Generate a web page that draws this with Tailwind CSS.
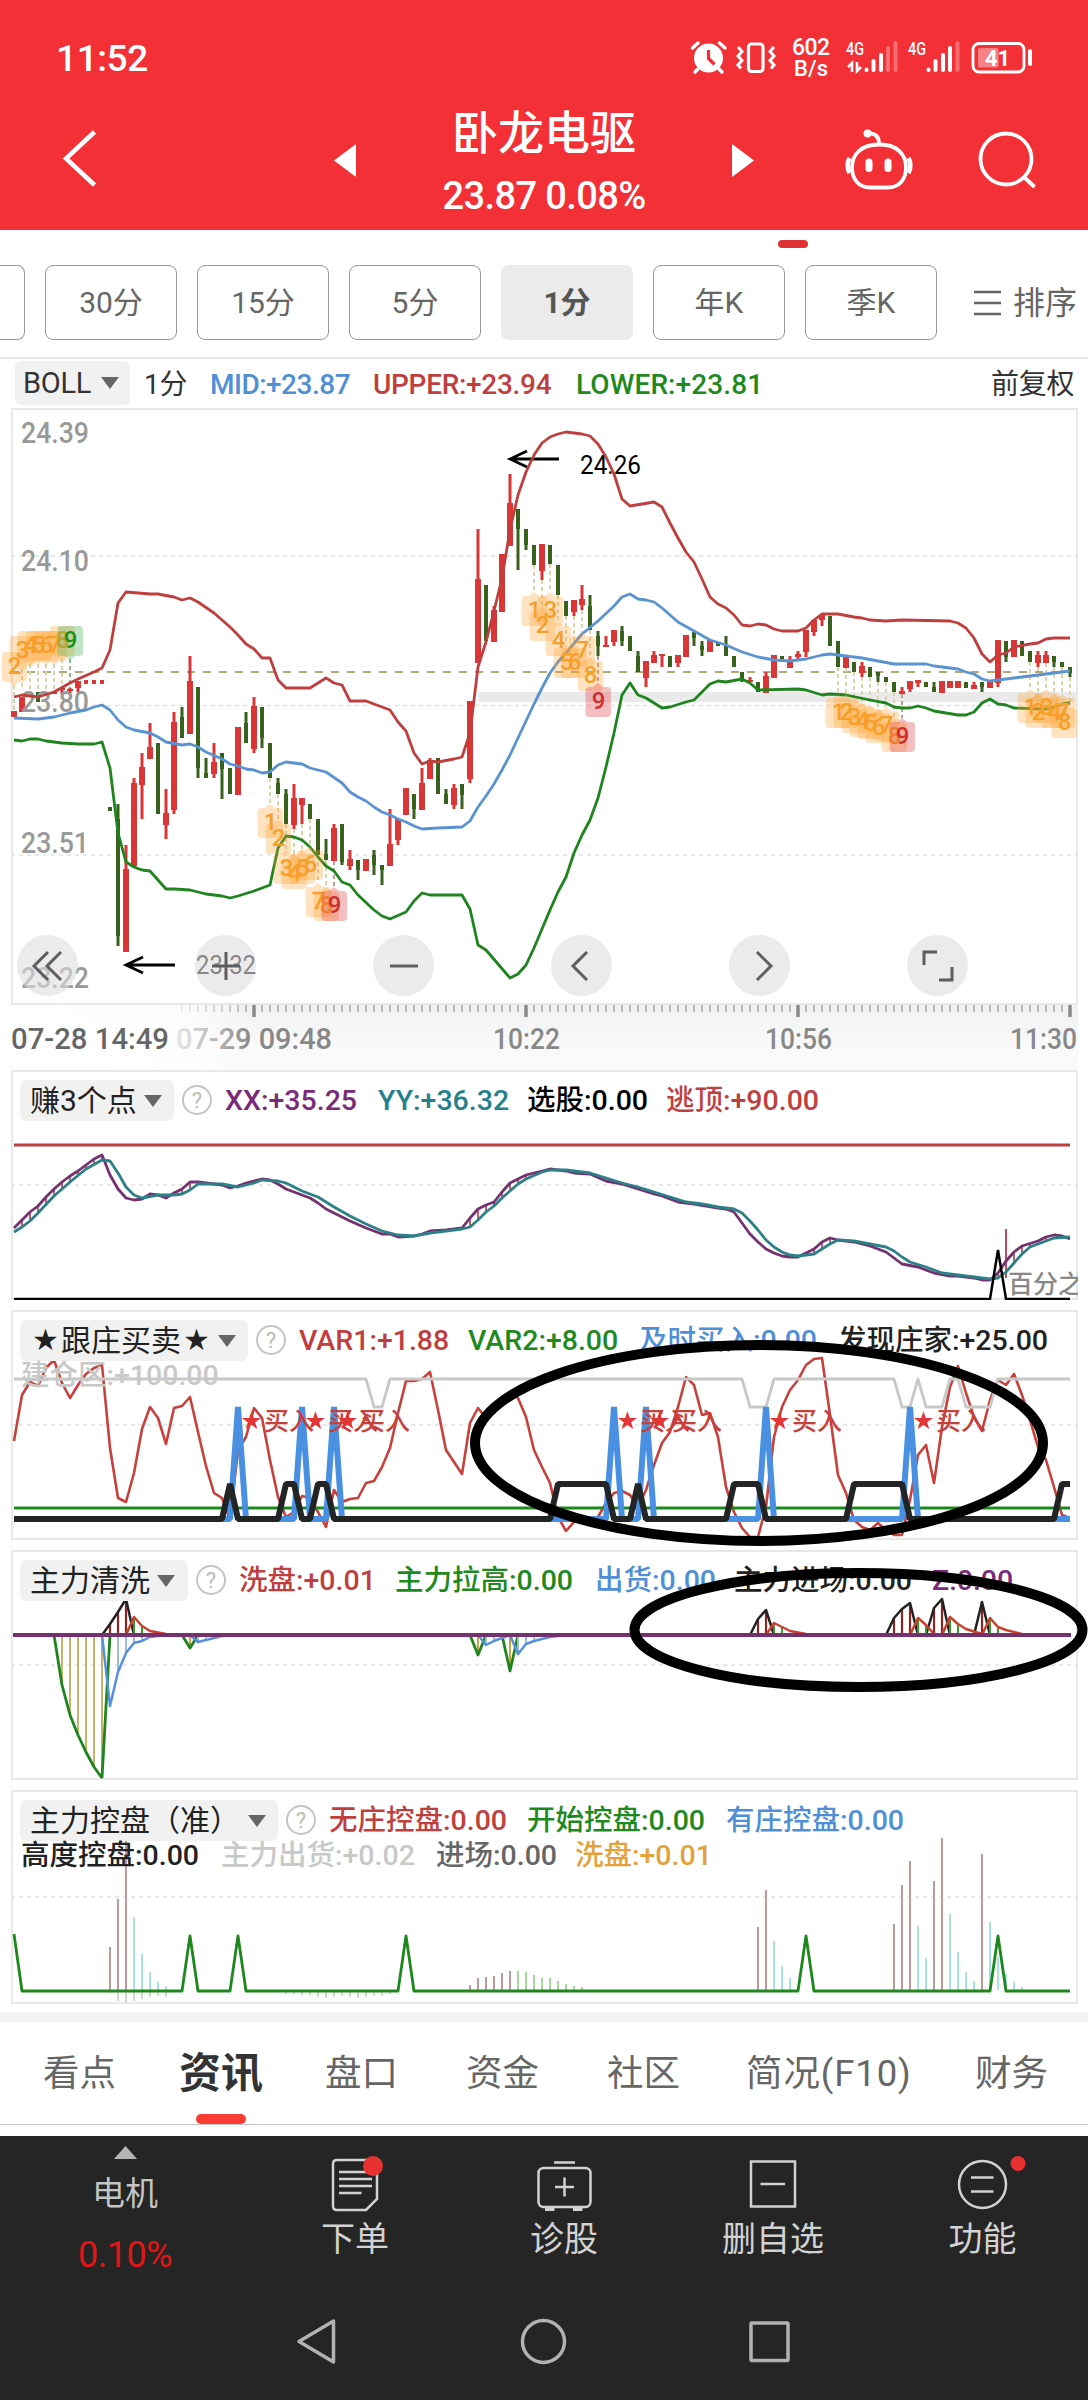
<!DOCTYPE html>
<html lang="zh-CN">
<head>
<meta charset="UTF-8">
<meta name="viewport" content="width=1088">
<title>卧龙电驱</title>
<script src="https://cdn.jsdelivr.net/npm/@tailwindcss/browser@4"></script>
</head>
<body class="bg-white">
<div class="relative w-[1088px] h-[2400px] overflow-hidden bg-white font-['Roboto','Noto_Sans_CJK_SC',sans-serif] text-[#222]">

    <!-- 顶部 -->
    <header class="h-[230px] bg-[#f23036] text-white">
        <div class="h-[100px] flex justify-between pl-[56px] pr-[54px]">
            <div class="pt-[32px] text-[37px] leading-[54px] font-medium tracking-[-0.4px]">11:52</div>
            <svg class="w-[344px] h-[100px]" viewBox="690 0 344 100" fill="none" stroke="#fff">
                <circle cx="708.5" cy="58" r="14.5" fill="#fff" stroke="none"/>
                <path d="M708.500 50v8.500l6 6" stroke="#f23036" stroke-width="3.200"/>
                <path d="M692.500 48l5.500-5M725 48l-5.500-5M698 69l-3 3M719 69l3 3" stroke-width="3.500" stroke-linecap="round"/>
                <rect x="748.500" y="44" width="14.500" height="27.500" rx="3" stroke-width="3.200"/>
                <path d="M738 47l4 4.500-4 4.500 4 4.500-4 4.500 3 3.500M774 47l-4 4.500 4 4.500-4 4.500 4 4.500-3 3.500" stroke-width="3"/>
                <g fill="#fff" stroke="none" font-weight="500">
                    <text x="792" y="55" font-size="23" textLength="38">602</text>
                    <text x="794" y="76" font-size="22" textLength="34">B/s</text>
                    <text x="846" y="55" font-size="19" textLength="18" lengthAdjust="spacingAndGlyphs">4G</text>
                    <text x="908" y="55" font-size="19" textLength="18" lengthAdjust="spacingAndGlyphs">4G</text>
                </g>
                <path d="M852 72v-9l-4 4M857 62v9l4-4" stroke-width="2.500"/>
                <g stroke-width="4" stroke-linecap="round">
                    <path d="M866.500 69.500v.5M873.500 61v9M881 55v15M928.500 69.500v.5M935.500 61v9M943 55v15M950 48v22"/>
                    <path d="M888 48v22M895.500 43v27M957.500 43v27" stroke-opacity=".3"/>
                </g>
                <rect x="973" y="43.500" width="51" height="28.500" rx="6" stroke-width="2.800"/>
                <rect x="978" y="48" width="20.500" height="19.500" rx="2" fill="#fff" fill-opacity=".4" stroke="none"/>
                <path d="M1030 51v13" stroke-width="4" stroke-linecap="round"/>
                <text x="985" y="66" font-size="22" font-weight="700" fill="#fff" stroke="none">41</text>
            </svg>
        </div>
        <div class="h-[130px] flex pl-[60px]">
            <svg class="w-10 h-[60px] mt-[28px]" viewBox="60 128 40 60" fill="none" stroke="#fff" stroke-width="4.500"><path d="M94.500 132L66 158.500 94.500 185"/></svg>
            <div class="flex pl-[234px]">
                <svg class="w-[22px] h-[34px] mt-[44px]" viewBox="0 0 22 34"><path d="M22 0v33L0 16.500z" fill="#fff"/></svg>
                <div class="w-[376px] text-center">
                    <div class="text-[46px] leading-[66px] font-medium">卧龙电驱</div>
                    <div class="text-[38px] leading-[60px] font-medium tracking-[-0.6px]">23.87 0.08%</div>
                </div>
                <svg class="w-[22px] h-[34px] mt-[44px]" viewBox="0 0 22 34"><path d="M0 0v33l22-16.500z" fill="#fff"/></svg>
            </div>
            <svg class="w-[200px] h-[70px] mt-[24px] ml-[86px]" viewBox="840 124 200 70" fill="none" stroke="#fff" stroke-width="3.800">
                <path d="M879 144.500h1c17 0 26 10 26 23 0 12-7 20-18 20h-18c-11 0-18-8-18-20 0-13 9-23 27-23z"/>
                <path d="M849.500 158c-2.500 4-2.500 11 0 15M908.500 158c2.500 4 2.500 11 0 15" stroke-width="4.500"/>
                <path d="M868 133.500c7-1 11 3 11 10"/>
                <circle cx="867.500" cy="133.500" r="4" fill="#fff" stroke="none"/>
                <path d="M869 162v6.500M888 162v6.500" stroke-width="7" stroke-linecap="round"/>
                <circle cx="1006" cy="159" r="25.500"/>
                <path d="M1024 177l10.500 10"/>
            </svg>
        </div>
    </header>

    <!-- 周期 -->
    <section class="h-[129px] border-b-2 border-[#e8e8e8]">
        <div class="pt-[10px] h-[35px] pl-[778px]"><div class="w-[30px] h-2 rounded-full bg-[#df3033]"></div></div>
        <div class="flex items-center text-[30px] leading-none text-[#666]">
            <div class="w-[25px] h-[75px] border border-l-0 border-[#999] rounded-r-lg mr-5"></div>
            <div class="flex gap-5">
                <div class="w-[132px] h-[75px] border border-[#999] rounded-lg flex items-center justify-center">30分</div>
                <div class="w-[132px] h-[75px] border border-[#999] rounded-lg flex items-center justify-center">15分</div>
                <div class="w-[132px] h-[75px] border border-[#999] rounded-lg flex items-center justify-center">5分</div>
                <div class="w-[132px] h-[75px] bg-[#ebebeb] rounded-lg flex items-center justify-center font-bold text-[#555]">1分</div>
                <div class="w-[132px] h-[75px] border border-[#999] rounded-lg flex items-center justify-center">年K</div>
                <div class="w-[132px] h-[75px] border border-[#999] rounded-lg flex items-center justify-center">季K</div>
            </div>
            <svg class="w-[27px] h-[26px] ml-[37px] mr-3" viewBox="0 0 27 26" stroke="#666" stroke-width="2.500"><path d="M0 2h27M0 13h27M0 24h27"/></svg>
            <div class="text-[32px] whitespace-nowrap">排序</div>
        </div>
    </section>

    <!-- 主图指标 -->
    <div class="h-[49px] flex items-start pl-[15px] text-[28px] leading-[44px] whitespace-nowrap tracking-[-0.3px]">
        <div class="w-[129px]">
            <div class="w-[115px] h-[44px] mt-[2px] bg-[#f1f1f1] rounded-md flex items-center pl-[8px] text-[29px] text-[#333]">BOLL
                <svg class="w-[18px] h-3 ml-[10px]" viewBox="0 0 18 12"><path d="M0 0h18l-9 12z" fill="#666"/></svg>
            </div>
        </div>
        <div class="w-[66px] pt-[4px] text-[#333]">1分</div>
        <div class="w-[163px] pt-[4px] font-medium text-[#4f8fd6] tracking-[-0.5px]">MID:+23.87</div>
        <div class="w-[203px] pt-[4px] font-medium text-[#bf3f3f]">UPPER:+23.94</div>
        <div class="w-[415px] pt-[4px] font-medium text-[#1e8a1e] tracking-[0.1px]">LOWER:+23.81</div>
        <div class="pt-[4px] text-[#333]">前复权</div>
    </div>

    <!-- K线 -->
    <div class="relative h-[597px]">
        <svg id="kline" class="block w-[1088px] h-[597px]" viewBox="0 408 1088 597"></svg>
        <div class="absolute left-[17px] bottom-[9px] flex gap-[117px]">
            <div class="size-[61px] rounded-full bg-[#dedede]/60 flex items-center justify-center"><svg class="size-10" viewBox="0 0 40 40" fill="none" stroke="#5e5e5e" stroke-width="3"><path d="M20 6L6 20l14 14M33 6L19 20l14 14"/></svg></div>
            <div class="size-[61px] rounded-full bg-[#dedede]/60 flex items-center justify-center"><svg class="size-10" viewBox="0 0 40 40" fill="none" stroke="#5e5e5e" stroke-width="3"><path d="M6 20h28M20 6v28"/></svg></div>
            <div class="size-[61px] rounded-full bg-[#dedede]/60 flex items-center justify-center"><svg class="size-10" viewBox="0 0 40 40" fill="none" stroke="#5e5e5e" stroke-width="3"><path d="M6 20h28"/></svg></div>
            <div class="size-[61px] rounded-full bg-[#dedede]/60 flex items-center justify-center"><svg class="size-10" viewBox="0 0 40 40" fill="none" stroke="#5e5e5e" stroke-width="3"><path d="M25 6L11 20l14 14"/></svg></div>
            <div class="size-[61px] rounded-full bg-[#dedede]/60 flex items-center justify-center"><svg class="size-10" viewBox="0 0 40 40" fill="none" stroke="#5e5e5e" stroke-width="3"><path d="M17 6l14 14-14 14"/></svg></div>
            <div class="size-[61px] rounded-full bg-[#dedede]/60 flex items-center justify-center"><svg class="size-10" viewBox="0 0 40 40" fill="none" stroke="#5e5e5e" stroke-width="3"><path d="M6 19V6h13M21 34h13V21"/></svg></div>
        </div>
    </div>

    <!-- 时间轴 -->
    <svg id="axis" class="block w-[1088px] h-[65px]" viewBox="0 1005 1088 65"></svg>

    <!-- 副图 -->
    <div class="flex flex-col gap-[10px] pl-[11px] text-[28.500px] leading-[41px] whitespace-nowrap font-medium">
        <div class="relative w-[1067px] h-[230px]">
            <svg id="p1" class="absolute inset-0 w-[1067px] h-[230px]" viewBox="11 1070 1067 230"></svg>
            <div class="relative flex pl-[9px] pt-[10px]">
                <div class="w-[154px] h-[41px] bg-[#f1f1f1] rounded-md flex items-center pl-[10px] text-[30px] font-normal text-[#222]">赚3个点
                    <svg class="w-[18px] h-3 ml-[7px]" viewBox="0 0 18 12"><path d="M0 0h18l-9 12z" fill="#666"/></svg></div>
                <div class="size-[30px] mt-[5px] ml-2 mr-[13px] border-2 border-[#c4c4c4] rounded-full text-[#bbb] text-[22px] leading-[27px] text-center font-normal">?</div>
                <div class="w-[153px] text-[#7a2a78]">XX:+35.25</div>
                <div class="w-[149px] text-[#25808a]">YY:+36.32</div>
                <div class="w-[139px] text-black">选股:0.00</div>
                <div class="text-[#bf3f3f]">逃顶:+90.00</div>
            </div>
        </div>
        <div class="relative w-[1067px] h-[230px]">
            <svg id="p2" class="absolute inset-0 w-[1067px] h-[230px]" viewBox="11 1310 1067 230"></svg>
            <div class="relative flex pl-[9px] pt-[10px]">
                <div class="w-[228px] h-[41px] bg-[#f1f1f1] rounded-md flex items-center pl-[10px] text-[30px] font-normal text-[#222]"><span class="text-[24px] w-[31px] text-center">★</span>跟庄买卖<span class="text-[24px] w-[31px] text-center">★</span>
                    <svg class="w-[18px] h-3 ml-[6px]" viewBox="0 0 18 12"><path d="M0 0h18l-9 12z" fill="#666"/></svg></div>
                <div class="size-[30px] mt-[5px] ml-2 mr-[13px] border-2 border-[#c4c4c4] rounded-full text-[#bbb] text-[22px] leading-[27px] text-center font-normal">?</div>
                <div class="w-[169px] text-[#bf3f3f]">VAR1:+1.88</div>
                <div class="w-[171px] text-[#1e8a1e]">VAR2:+8.00</div>
                <div class="w-[199px] text-[#4f8fd6]">及时买入:0.00</div>
                <div class="text-[#222]">发现庄家:+25.00</div>
            </div>
            <div class="relative pl-[10px] -mt-[6px] text-[#c8c8c8]">建仓区:+100.00</div>
        </div>
        <div class="relative w-[1067px] h-[230px]">
            <svg id="p3" class="absolute inset-0 w-[1067px] h-[230px]" viewBox="11 1550 1067 230"></svg>
            <div class="relative flex pl-[9px] pt-[10px]">
                <div class="w-[168px] h-[41px] bg-[#f1f1f1] rounded-md flex items-center pl-[10px] text-[30px] font-normal text-[#222]">主力清洗
                    <svg class="w-[18px] h-3 ml-[7px]" viewBox="0 0 18 12"><path d="M0 0h18l-9 12z" fill="#666"/></svg></div>
                <div class="size-[30px] mt-[5px] ml-2 mr-[13px] border-2 border-[#c4c4c4] rounded-full text-[#bbb] text-[22px] leading-[27px] text-center font-normal">?</div>
                <div class="w-[156px] text-[#bf3f3f]">洗盘:+0.01</div>
                <div class="w-[200px] text-[#1e8a1e]">主力拉高:0.00</div>
                <div class="w-[139px] text-[#4f8fd6]">出货:0.00</div>
                <div class="w-[198px] text-[#222]">主力进场:0.00</div>
                <div class="text-[#7a2a78]">Z:0.00</div>
            </div>
        </div>
        <div class="relative w-[1067px] h-[214px]">
            <svg id="p4" class="absolute inset-0 w-[1067px] h-[214px]" viewBox="11 1790 1067 214"></svg>
            <div class="relative flex pl-[9px] pt-[10px]">
                <div class="w-[258px] h-[41px] bg-[#f1f1f1] rounded-md flex items-center pl-[10px] text-[30px] font-normal text-[#222]">主力控盘（准）
                    <svg class="w-[18px] h-3 ml-[8px]" viewBox="0 0 18 12"><path d="M0 0h18l-9 12z" fill="#666"/></svg></div>
                <div class="size-[30px] mt-[5px] ml-2 mr-[13px] border-2 border-[#c4c4c4] rounded-full text-[#bbb] text-[22px] leading-[27px] text-center font-normal">?</div>
                <div class="w-[198px] text-[#bf3f3f]">无庄控盘:0.00</div>
                <div class="w-[199px] text-[#1e8a1e]">开始控盘:0.00</div>
                <div class="text-[#4f8fd6]">有庄控盘:0.00</div>
            </div>
            <div class="relative flex pl-[10px] -mt-[6px]">
                <div class="w-[200px] text-[#222]">高度控盘:0.00</div>
                <div class="w-[215px] text-[#c8c8c8]">主力出货:+0.02</div>
                <div class="w-[139px] text-[#666]">进场:0.00</div>
                <div class="text-[#e3a23c]">洗盘:+0.01</div>
            </div>
        </div>
    </div>

    <!-- 手绘圈注 -->
    <svg class="absolute left-0 top-[1300px] w-[1088px] h-[420px]" viewBox="0 1300 1088 420" fill="none" stroke="#000" stroke-width="10">
        <ellipse cx="759" cy="1443" rx="284" ry="98"/>
        <ellipse cx="858.500" cy="1630" rx="224" ry="57"/>
    </svg>

    <!-- 资讯标签 -->
    <div class="mt-2 h-[10px] bg-[#f4f4f4]"></div>
    <nav class="relative h-[103px] border-b border-[#c4c4c4] flex text-[36.500px] leading-[104px] text-[#666] whitespace-nowrap pl-[43px]">
        <div class="w-[136px]">看点</div>
        <div class="w-[146px] text-[42px] font-bold text-[#333]">资讯</div>
        <div class="w-[141px]">盘口</div>
        <div class="w-[141px]">资金</div>
        <div class="w-[139px]">社区</div>
        <div class="w-[229px] tracking-[0.9px]">简况(F10)</div>
        <div>财务</div>
        <div class="absolute left-[196px] bottom-0 w-[50px] h-[10px] rounded-full bg-[#fa3c32]"></div>
    </nav>

    <!-- 底部 -->
    <footer class="mt-[11px] h-[264px] bg-[#252525] text-[34px] text-[#d2d2d2]">
        <div class="h-[144px] flex leading-[50px] text-center">
            <div class="w-[250px] pt-[10px] flex flex-col items-center">
                <svg class="w-[25px] h-[14px]" viewBox="0 0 25 14"><path d="M12.500 0L25 14H0z" fill="#b4b4b4"/></svg>
                <div class="mt-[10px] text-[33px] text-[#c4c4c4]">电机</div>
                <div class="mt-[11px] text-[36px] tracking-[-0.5px] text-[#e01616]">0.10%</div>
            </div>
            <div class="w-[210px] pt-[18px] flex flex-col items-center">
                <svg class="w-[60px] h-[60px] overflow-visible" viewBox="325 2154 60 60" fill="none" stroke="#d2d2d2" stroke-width="2.500">
                    <path d="M337 2160h36q4 0 4 4v35l-11 11h-29q-4 0-4-4v-42q0-4 4-4z"/>
                    <path d="M339 2172h30M339 2179h33M339 2186h33M339 2193h22.500"/>
                    <circle cx="373" cy="2166" r="10" fill="#e83232" stroke="none"/>
                </svg>
                <div>下单</div>
            </div>
            <div class="w-[208px] pt-[18px] flex flex-col items-center">
                <svg class="w-[60px] h-[60px]" viewBox="534 2154 60 60" fill="none" stroke="#d2d2d2" stroke-width="2.500">
                    <rect x="538.500" y="2168" width="52" height="39" rx="5"/>
                    <path d="M554 2162.500h21M564.500 2177.500v19M555 2187h19"/>
                    <path d="M545 2209h9.500M573 2209h9.500" stroke-width="4"/>
                </svg>
                <div>诊股</div>
            </div>
            <div class="w-[210px] pt-[18px] flex flex-col items-center">
                <svg class="w-[60px] h-[60px]" viewBox="743 2154 60 60" fill="none" stroke="#d2d2d2" stroke-width="2.500">
                    <rect x="751" y="2161.500" width="44" height="45"/>
                    <path d="M760.500 2184H785"/>
                </svg>
                <div>删自选</div>
            </div>
            <div class="w-[209px] pt-[18px] flex flex-col items-center">
                <svg class="w-[60px] h-[60px] overflow-visible" viewBox="953 2154 60 60" fill="none" stroke="#d2d2d2" stroke-width="2.500">
                    <circle cx="982.500" cy="2184.500" r="23.500"/>
                    <path d="M971 2177.500h22.500M971 2191.500h22.500"/>
                    <circle cx="1018" cy="2163.500" r="7.500" fill="#e83232" stroke="none"/>
                </svg>
                <div>功能</div>
            </div>
        </div>
        <svg class="block w-[1088px] h-[120px]" viewBox="0 2280 1088 120" fill="none" stroke="#b2b2b2" stroke-width="3.500" stroke-linejoin="round">
            <path d="M333.500 2321v41L299 2341.500z"/>
            <circle cx="543.500" cy="2341.500" r="21"/>
            <rect x="751" y="2323" width="37" height="37.500" rx="1"/>
        </svg>
    </footer>
</div>

<script>
const RED = '#bf3f3f', GREEN = '#1e841e', BLUE = '#5a93d2';
// 每根K线间隔8px
const X = i => 14 + 8 * i;

// "索引:y 索引:y ..." 转为点
function pts(s) {
    return s.trim().split(/\s+/).map(p => p.split(':').map(Number));
}
function line(s, color, w = 2.5, join = 'round') {
    return `<polyline points="${pts(s).map(([i, y]) => X(i) + ',' + y).join(' ')}" fill="none" stroke="${color}" stroke-width="${w}" stroke-linejoin="${join}"/>`;
}
function at(p, i) {
    for (let k = 1; k < p.length; k++) {
        if (i <= p[k][0]) {
            const [a, ya] = p[k - 1], [b, yb] = p[k];
            return ya + (yb - ya) * (i - a) / (b - a);
        }
    }
    return p[p.length - 1][1];
}
function vline(i, y1, y2, color, w = 2) {
    return `<line x1="${X(i)}" x2="${X(i)}" y1="${y1}" y2="${y2}" stroke="${color}" stroke-width="${w}"/>`;
}
function hline(y, color, w, dash = '', x1 = 14, x2 = 1070) {
    return `<line x1="${x1}" x2="${x2}" y1="${y}" y2="${y}" stroke="${color}" stroke-width="${w}" stroke-dasharray="${dash}"/>`;
}
const frame = (y, h) => `<rect x="12" y="${y + 1}" width="1065" height="${h - 2}" fill="none" stroke="#e8e8e8" stroke-width="2"/>`;
const grid = y => hline(y, '#e2e2e2', 1.5, '4 4', 11, 1077);
const put = (id, html) => document.getElementById(id).innerHTML = html;

// ---- 主图 ----
const upper = '0:697 1:695 3:697 5:692 7:683 8:679 10:672 11:668 12:650 13:603 14:592 17:594 18:594 20:597 21:600 22:598 23:602 25:613 26:620 27:627 28:635 29:644 30:649 31:658 32:658 33:680 34:688 37:688 39:678 40:683 41:685 42:701 44:701 46:707 47:710 48:722 49:731 50:753 51:764 52:761 53:762 55:759 56:757 57:733 58:667 59:642 60:611 61:578 62:530 63:495 64:472 65:455 66:443 67:437 68:434 69:432 71:434 72:436 73:444 74:457 75:474 76:499 77:506 80:502 81:507 82:523 83:538 84:552 85:562 86:579 87:597 88:604 89:608 90:615 91:625 92:626 93:624 94:625 95:629 96:631 98:631 99:628 100:620 101:614 103:614 105:617 106:618 107:620 109:621 111:620 117:621 118:623 119:628 120:638 121:654 122:662 123:655 124:653 125:647 127:644 128:643 129:639 130:638 132:638';
const mid = '0:718 3:719 5:717 7:713 9:710 10:707 11:705 12:710 13:720 14:727 15:730 17:733 18:737 19:742 21:745 22:744 23:747 24:752 26:759 27:764 28:766 29:769 30:770 31:773 32:772 33:765 34:762 35:763 36:764 37:768 39:772 41:783 42:792 43:797 44:801 45:807 46:812 47:815 48:819 49:822 50:826 51:829 53:828 56:827 57:821 58:807 59:796 60:784 61:770 62:755 63:738 64:721 65:704 66:688 67:673 68:662 69:653 71:634 73:621 75:606 76:597 77:594 78:599 79:600 80:602 81:608 83:622 85:631 87:640 89:645 91:652 93:657 95:660 97:661 98:660 99:659 101:655 102:654 103:655 105:657 106:658 108:661 110:664 114:664 115:666 118:669 119:672 120:674 121:679 122:681 124:679 125:678 127:676 129:674 130:673 132:671';
const lower = '0:740 1:741 2:739 3:739 4:741 6:743 8:744 10:744 11:742 12:768 13:833 14:862 15:867 16:870 17:871 18:880 19:889 20:889 22:890 24:894 26:896 27:898 28:896 30:891 31:888 32:885 33:848 34:836 35:837 36:840 37:847 38:857 39:866 40:871 41:882 42:885 43:895 45:910 46:916 47:919 49:912 50:901 51:893 52:895 56:895 57:909 58:945 59:950 62:978 63:974 64:965 65:948 66:929 67:910 68:892 69:877 70:853 71:835 72:820 73:798 74:767 75:733 76:695 77:683 78:695 79:698 80:703 81:708 82:707 84:702 85:700 86:692 87:684 88:681 89:682 91:679 92:683 93:690 98:689 99:690 101:695 102:694 104:695 107:700 109:703 110:707 111:708 112:708 113:706 114:708 115:711 118:715 119:715 120:712 121:703 122:699 123:704 124:705 125:708 129:709 130:707 131:704 132:703';

// 索引, 涨跌(r/g), 最高, 最低, 实体上, 实体下
const candles = `0 r 711 717 711 717|1 r 697 712 697 712|3 g 692 702 692 702|5 r 692 694 692 694|6 r 688 694 688 690|7 r 688 693 689 691|8 r 681 692 681 688|12 g 807 811 807 811|13 g 804 946 819 936
14 r 845 952 869 952|15 r 778 866 783 866|16 r 753 819 767 785|17 r 723 759 747 759|18 g 743 814 743 814|19 r 789 839 813 825|20 r 712 814 722 810|21 g 707 738 717 738|22 r 656 734 681 734|23 g 687 778 687 768|24 g 758 778 773 778|25 r 743 778 762 774
26 g 753 799 753 769|27 g 768 794 768 794|28 r 727 795 727 795|29 g 712 743 723 743|30 r 697 753 706 749|31 g 707 748 707 738|32 g 743 778 743 778|33 g 778 794 783 794|34 g 789 824 794 824|35 r 784 829 798 825|36 r 798 824 798 805|37 g 804 819 804 819
38 g 819 855 819 855|39 g 839 860 854 860|40 r 824 861 828 861|41 g 824 865 824 862|42 r 850 870 859 866|43 g 860 880 860 870|44 r 859 871 859 871|45 g 850 875 855 865|46 g 865 885 865 870|47 r 809 866 844 866|48 r 819 845 819 840|49 r 788 815 788 815
50 g 794 819 794 809|51 r 768 810 783 810|52 r 758 779 760 779|53 g 758 794 758 794|54 g 789 804 794 804|55 r 784 809 788 805|56 g 784 809 784 795|57 r 701 783 701 779|58 r 529 663 579 663|59 g 585 641 585 641|60 r 606 642 610 642|61 r 554 612 554 612
62 r 474 546 503 546|63 g 509 570 509 529|64 g 529 550 529 545|65 g 545 565 545 565|66 r 544 580 544 571|67 g 545 564 545 564|68 g 565 595 565 595|69 g 601 616 601 616|70 r 600 616 600 612|71 r 585 610 599 605|72 g 595 630 606 630|73 g 631 656 636 646
74 r 636 647 645 647|75 r 630 646 630 642|76 g 626 646 631 641|77 g 636 651 636 651|78 g 651 672 656 672|79 r 661 687 661 678|80 r 651 663 655 663|81 r 654 667 654 656|82 g 656 667 656 667|83 r 655 667 655 663|84 r 635 657 635 657|85 g 632 646 632 638
86 g 641 656 646 650|87 r 640 652 640 652|88 g 643 646 643 646|89 g 636 656 645 656|90 g 656 667 656 667|91 g 672 682 672 679|92 r 677 682 680 682|93 g 682 692 682 692|94 r 672 693 676 693|95 r 655 678 655 678|96 g 656 660 656 660|97 r 656 668 660 668|98 r 651 659 654 657
99 r 630 657 630 652|100 r 620 636 620 632|101 r 615 626 615 620|102 g 616 646 616 646|103 g 641 667 641 667|104 r 656 668 656 668|105 g 662 672 662 672|106 r 662 677 666 673|107 g 667 677 667 677|108 g 672 682 672 676|109 g 677 682 677 682|110 g 682 692 682 692
111 r 687 694 691 694|112 r 681 692 681 689|113 r 680 687 680 683|114 g 682 687 682 687|115 g 682 692 687 692|116 r 681 693 681 693|117 r 681 688 681 688|118 r 681 688 681 688|119 g 682 688 682 688|120 r 682 689 685 689|121 g 682 692 682 687|122 r 681 688 681 688
123 r 640 687 640 683|124 g 641 662 641 657|125 r 640 657 640 657|126 g 641 656 641 656|127 g 651 662 651 662|128 r 651 667 655 663|129 r 651 663 655 663|130 g 656 667 656 662|131 g 662 667 662 667|132 g 667 677 667 673`;

// 九转标记: 索引, 数字, 方块顶部y
const marks = '65 1 596|66 2 611|67 3 596|68 4 626|69 5 648|70 6 648|71 7 636|72 8 661|73 9 687|32 1 808|33 2 824|34 3 854|35 4 859|36 5 854|37 6 850|38 7 887|39 8 891|40 9 891|103 1 698|104 2 698|105 3 703|106 4 707|107 5 709|108 6 713|109 7 711|110 8 722|111 9 722|127 1 693|128 2 698|129 3 693|130 4 698|131 7 698|132 8 708';
const topMarks = '0 2 652|1 3 636|2 4 631|3 5 631|4 6 631|5 7 631|6 8 626|7 9 626';

let s = frame(408, 597);
s += '<rect x="478" y="692" width="599" height="10" fill="#eaeaea"/>';
s += grid(556) + grid(705.5) + grid(855) + hline(672, '#b3a77a', 2, '8 8', 11, 1070);
const bars = candles.split(/[|\n]/).map(c => c.split(' '));
marks.split('|').forEach(m => {
    const [i, n, y] = m.split(' ');
    const bar = bars.find(b => b[0] === i);
    s += `<line x1="${X(+i)}" x2="${X(+i)}" y1="${+bar[3]}" y2="${y - 4}" stroke="${n === '9' ? '#c98' : '#e0d2a8'}" stroke-width="2" stroke-dasharray="4 3"/>`;
});
topMarks.split('|').forEach(m => {
    const [i, n, y] = m.split(' ');
    s += `<line x1="${X(+i)}" x2="${X(+i)}" y1="${+y + 33}" y2="${i < 1 ? 710 : 690}" stroke="${n === '9' ? '#8b8' : '#e0d2a8'}" stroke-width="2" stroke-dasharray="4 3"/>`;
});
bars.forEach(([i, c, h, l, t, b]) => {
    const x = X(+i), col = c === 'r' ? '#db3535' : '#38611c', w = c === 'r' ? 6 : 4;
    s += `<rect x="${x - 1.5}" y="${h}" width="3" height="${l - h}" fill="${col}"/>`;
    s += `<rect x="${x - w / 2}" y="${t}" width="${w}" height="${b - t}" fill="${col}"/>`;
});
s += `<path d="M84 682h20" stroke="#db3535" stroke-width="4" stroke-dasharray="4 4"/>`;
const label = (x, y, t) => `<text x="${x}" y="${y}" font-size="29" font-weight="500" fill="#999" textLength="68" lengthAdjust="spacingAndGlyphs">${t}</text>`;
s += label(21, 443, '24.39') + label(21, 571, '24.10') + label(21, 712, '23.80') + label(21, 853, '23.51') + label(21, 988, '23.22');
s += '<g fill="none" stroke="#000" stroke-width="2.800"><path d="M559 459H510M527 451l-17 8 17 8M175 965h-48M143 957l-17 8 17 8"/></g>';
s += '<text x="580" y="474" font-size="26" fill="#000" textLength="61" lengthAdjust="spacingAndGlyphs">24.26</text>';
s += '<text x="196" y="974" font-size="26" fill="#000" textLength="60" lengthAdjust="spacingAndGlyphs">23.32</text>';
s += line(upper, RED, 2.8) + line(mid, BLUE, 2.8) + line(lower, GREEN, 2.8);
function mark(i, n, y, top) {
    const x = Math.min(X(i), 1064), last = n === '9';
    const bg = last ? (top ? '#3ea84a' : '#e0343a') : '#ff9f2c';
    const fg = last ? (top ? '#159215' : '#d02c2c') : '#f5a02a';
    const tip = top ? `M${x - 5} ${y + 30}l5 4 5-4z` : `M${x - 5} ${y}l5-4 5 4z`;
    return `<g fill="${bg}" fill-opacity="${last ? .32 : .3}"><rect x="${x - 12.500}" y="${y}" width="25.500" height="30" rx="4"/><path d="${tip}"/></g>
        <text x="${x + .5}" y="${y + 22}" font-size="24" font-weight="500" text-anchor="middle" fill="${fg}">${n}</text>`;
}
marks.split('|').forEach(m => { const [i, n, y] = m.split(' '); s += mark(+i, n, +y, false); });
topMarks.split('|').forEach(m => { const [i, n, y] = m.split(' '); s += mark(+i, n, +y, true); });
put('kline', s);

// ---- 时间轴 ----
s = `<defs>
    <linearGradient id="bg" x2="0" y2="1"><stop stop-color="#f1f1f1"/><stop offset=".6" stop-color="#f9f9f9"/><stop offset="1" stop-color="#fbfbfb"/></linearGradient>
    <linearGradient id="fade"><stop stop-color="#fff"/><stop offset=".6" stop-color="#fff" stop-opacity=".92"/><stop offset=".75" stop-color="#fff" stop-opacity=".7"/><stop offset="1" stop-color="#fff" stop-opacity="0"/></linearGradient>
</defs><rect x="11" y="1005" width="1067" height="65" fill="url(#bg)"/>`;
for (let i = 21; i <= 132; i++) {
    const big = (i - 30) % 34 === 0;
    s += vline(i, 1004, big ? 1017 : 1012, big ? '#888' : '#999', big ? 3.5 : 1.3);
}
const time = (x, w, t, c = '#888') => `<text x="${x}" y="1049" font-size="29.500" font-weight="500" fill="${c}" textLength="${w}" lengthAdjust="spacingAndGlyphs">${t}</text>`;
s += time(176, 156, '07-29 09:48') + time(493, 67, '10:22') + time(765, 67, '10:56') + time(1010, 67, '11:30');
s += '<rect x="0" y="1005" width="250" height="65" fill="url(#fade)"/>' + time(11, 158, '07-28 14:49', '#666');
put('axis', s);

// ---- 赚3个点 ----
const xx = '0:1228 1:1220 2:1212 3:1206 4:1197 5:1189 6:1182 7:1176 8:1171 9:1165 10:1159 11:1155 12:1175 13:1189 14:1198 15:1200 16:1199 17:1194 18:1195 19:1198 20:1193 21:1189 22:1182 23:1182 24:1183 26:1185 27:1188 28:1186 29:1183 30:1181 31:1179 32:1180 33:1184 34:1189 35:1192 36:1195 37:1198 38:1203 39:1209 40:1213 42:1221 44:1228 46:1234 47:1234 48:1237 50:1236 51:1234 52:1231 54:1230 56:1228 57:1218 58:1209 59:1205 60:1202 61:1192 62:1183 63:1179 64:1175 65:1173 66:1171 67:1169 69:1171 70:1173 72:1174 74:1181 76:1184 78:1189 80:1194 81:1196 82:1199 83:1202 85:1204 88:1208 89:1209 90:1212 91:1223 92:1234 93:1242 94:1249 95:1253 96:1256 97:1257 98:1257 99:1253 100:1249 101:1242 102:1238 103:1240 105:1242 107:1246 108:1249 109:1252 110:1258 111:1264 113:1267 115:1273 117:1276 118:1276 120:1278 121:1280 122:1280 123:1273 124:1261 125:1252 126:1246 128:1241 129:1237 130:1235 131:1236 132:1239';
const yy = '0:1232 1:1227 2:1221 3:1213 5:1196 7:1182 9:1169 11:1160 12:1161 13:1173 14:1187 15:1195 16:1198 18:1195 20:1195 21:1194 22:1190 23:1184 26:1184 28:1187 30:1183 31:1180 33:1181 34:1183 36:1191 38:1197 40:1207 42:1216 44:1224 46:1231 48:1235 50:1236 52:1233 54:1231 56:1229 57:1227 58:1220 59:1212 60:1206 61:1198 62:1191 63:1184 64:1179 66:1172 67:1170 69:1170 72:1173 74:1178 76:1183 78:1187 80:1192 82:1197 84:1202 86:1204 88:1207 90:1209 91:1213 92:1221 93:1230 94:1240 95:1247 96:1252 97:1255 98:1256 100:1254 101:1249 102:1244 103:1240 105:1241 107:1244 109:1247 110:1251 111:1257 112:1262 114:1267 116:1273 118:1275 120:1277 122:1279 123:1278 124:1272 125:1263 126:1254 127:1247 128:1244 130:1238 132:1237';
s = frame(1070, 230) + grid(1185) + hline(1145, RED, 3);
const px = pts(xx), py = pts(yy);
for (let i = 1; i < 132; i++) {
    const a = at(px, i), b = at(py, i);
    if (b - a > 3) s += vline(i, a, b, '#b8505a', 1.8);
}
s += vline(124, 1229, 1278, '#b8505a', 2);
s += line(xx, '#74306f', 2.8) + line(yy, '#2c8088', 2.8);
s += '<text x="1008" y="1293" font-size="25" fill="#888">百分之</text>';
s += line('0:1299 122:1299 123:1250 124:1299 132:1299', '#000', 2.5, 'miter');
put('p1', s);

// ---- 跟庄买卖 ----
s = frame(1310, 230) + grid(1425);
s += line('0:1441 1:1395 2:1382 3:1386 4:1368 5:1360 6:1383 7:1398 8:1385 9:1374 10:1368 11:1365 12:1448 13:1498 14:1502 15:1473 16:1429 17:1407 18:1418 19:1444 20:1408 21:1406 22:1397 23:1432 24:1466 25:1493 26:1498 27:1520 28:1450 29:1437 30:1408 31:1418 32:1460 33:1497 34:1517 35:1512 36:1496 37:1498 38:1512 39:1527 40:1490 41:1502 42:1499 43:1498 44:1483 45:1481 46:1467 47:1448 48:1413 49:1381 50:1381 51:1379 52:1372 53:1410 54:1450 55:1462 56:1474 57:1423 58:1408 59:1418 60:1413 61:1400 62:1392 63:1398 64:1417 65:1450 66:1467 67:1483 68:1517 69:1531 70:1522 72:1519 73:1517 74:1503 75:1493 76:1491 77:1495 78:1507 79:1490 80:1465 81:1443 82:1432 83:1407 84:1377 85:1385 86:1415 87:1413 88:1437 89:1487 90:1512 91:1528 92:1537 93:1537 94:1507 95:1437 96:1407 97:1390 98:1380 99:1365 100:1359 101:1358 102:1415 103:1475 104:1493 105:1520 106:1527 107:1530 108:1523 109:1530 110:1535 111:1535 112:1500 113:1455 114:1445 115:1483 116:1427 117:1387 118:1366 119:1393 120:1417 121:1431 122:1400 123:1380 124:1385 125:1374 126:1395 127:1420 128:1447 129:1460 130:1487 131:1515 132:1518', '#c8403c', 2.6);
s += hline(1508, '#1e8a1e', 3);
s += line('0:1379 44:1379 45:1407 46:1407 47:1379 91:1379 92:1407 94:1407 95:1379 110:1379 111:1407 112:1407 113:1379 114:1407 116:1407 117:1379 118:1379 119:1407 122:1407 123:1379 132:1379', '#c8c8c8', 2.8);
s += line('0:1519 27:1519 28:1407 29:1519 35:1519 36:1407 37:1519 39:1519 40:1407 41:1519 74:1519 75:1407 76:1519 78:1519 79:1407 80:1519 93:1519 94:1407 95:1519 111:1519 112:1407 113:1519 132:1519', '#4a90e2', 6, 'bevel');
s += line('0:1519 26:1519 27:1484 28:1519 33:1519 34:1484 35:1484 36:1519 37:1519 38:1484 39:1484 40:1519 67:1519 68:1484 74:1484 75:1519 77:1519 78:1484 79:1519 89:1519 90:1484 93:1484 94:1519 104:1519 105:1484 111:1484 112:1519 130:1519 131:1484 132:1484', '#222426', 6, 'bevel');
[28, 36, 40, 75, 79, 94, 112].forEach(i => {
    s += `<text x="${X(i) + 13.5}" y="1428" font-size="20" text-anchor="middle" fill="#e23535">★</text>`;
    s += `<text x="${X(i) + 26}" y="1430" font-size="25" fill="#c8403c">买入</text>`;
});
put('p2', s);

// ---- 主力清洗 ----
s = frame(1550, 230) + grid(1665);
const drop = '5:1635 6:1685 7:1715 8:1735 9:1752 10:1767 11:1778 12:1635';
for (let i = 6; i < 12; i++) s += vline(i, 1635, at(pts(drop), i), '#c9b26a', 2);
s += vline(22, 1635, 1645, '#c9a24a') + vline(58, 1635, 1652, '#c9a24a') + vline(62, 1635, 1669, '#c9a24a');
s += line(drop, GREEN, 2.8, 'bevel');
['21:1635 22:1648 23:1635', '57:1635 58:1655 59:1635', '61:1635 62:1671 63:1635'].forEach(p => s += line(p, GREEN, 2.8));
['11:1635 12:1706 13:1672 14:1653 15:1643 16:1641 17:1637 19:1635', '22:1635 23:1642 24:1640 26:1636 28:1635', '58:1635 59:1645 60:1641 62:1635 63:1654 64:1644 65:1641 67:1637 69:1635'].forEach(p => {
    const q = pts(p);
    q.forEach(([i, y]) => { if (y > 1638 && i > 12) s += vline(i, 1635, y, '#9dbcdc', 2); });
    s += line(p, '#5590dc', 2.5);
});
['11:1635 12:1624 13:1612 14:1599 15:1635', '92:1635 93:1619 94:1610 95:1635', '109:1635 110:1618 111:1609 112:1603 113:1635', '114:1635 115:1608 116:1599 117:1635', '120:1635 121:1602 122:1635'].forEach(p => {
    pts(p).forEach(([i, y]) => s += vline(i, y, 1635, '#8a2626', 2.2));
    s += line(p, '#222', 2.5);
});
['14:1635 15:1617 16:1626 17:1631 19:1634 21:1635', '94:1635 95:1623 96:1627 97:1631 99:1634', '112:1635 113:1618 114:1625 115:1634', '116:1635 117:1617 118:1624 119:1629 121:1634', '121:1635 122:1618 123:1627 124:1630 126:1634'].forEach(p => {
    pts(p).slice(1, 3).forEach(([i, y]) => s += vline(i, y, 1635, '#3a9a2a', 2));
    s += line(p, '#c8402f', 2.5);
});
s += hline(1635, '#74306f', 4, '', 13, 1071);
put('p3', s);

// ---- 主力控盘（准） ----
s = frame(1790, 214) + grid(1897);
const sticks = (list, color, base = 1990) => list.split(' ').forEach(p => { const [i, y] = p.split(':'); s += vline(+i, +y, base, color, 2); });
sticks('12:1947 13:1899 14:1840 57:1985 58:1978 59:1977 60:1976 61:1973 62:1971 93:1927 94:1890 110:1924 111:1885 112:1861 115:1881 116:1838 121:1854', '#c09a98');
sticks('15:1917 16:1954 17:1972 18:1982 19:1986 95:1941 96:1966 97:1978 113:1926 114:1958 117:1914 118:1952 119:1972 120:1981 122:1922 123:1957 124:1974 125:1982 126:1987', '#a6e4e4');
sticks('63:1971 64:1972 65:1975 66:1978 67:1978 68:1981 69:1984 70:1986 71:1987', '#a2d89c');
sticks('12:1993 13:2001 14:2003 15:2001 16:1999 17:1997 18:1996 19:1997 34:1994 35:1994 36:1995 37:1995 38:1997 39:1998 40:1997 41:1996 42:1997 43:1998 44:1997 45:1996 46:1996 47:1994', '#d4d4d4');
s += line('0:1934 1:1991 21:1991 22:1936 23:1991 27:1991 28:1936 29:1991 48:1991 49:1936 50:1991 98:1991 99:1936 100:1991 122:1991 123:1936 124:1991 132:1991', '#1c881c', 2.8);
put('p4', s);
</script>
</body>
</html>
